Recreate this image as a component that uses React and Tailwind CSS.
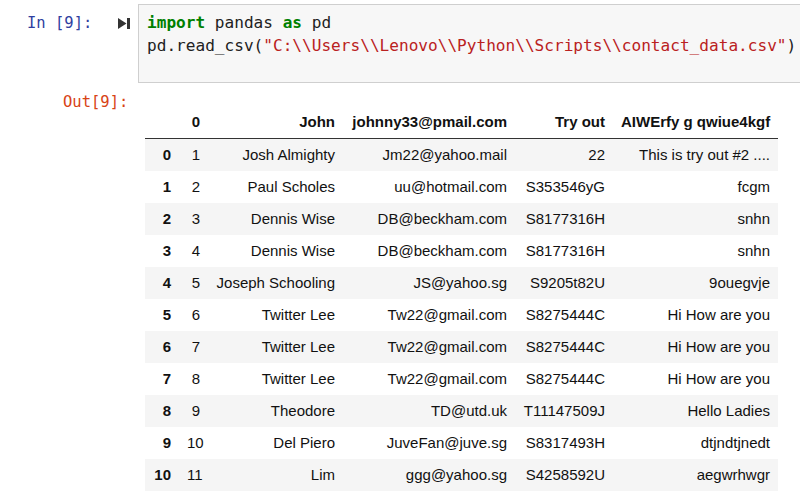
import React from 'react';

const rows = [
  ['0', '1', 'Josh Almighty', 'Jm22@yahoo.mail', '22', 'This is try out #2 ....'],
  ['1', '2', 'Paul Scholes', 'uu@hotmail.com', 'S353546yG', 'fcgm'],
  ['2', '3', 'Dennis Wise', 'DB@beckham.com', 'S8177316H', 'snhn'],
  ['3', '4', 'Dennis Wise', 'DB@beckham.com', 'S8177316H', 'snhn'],
  ['4', '5', 'Joseph Schooling', 'JS@yahoo.sg', 'S9205t82U', '9ouegvje'],
  ['5', '6', 'Twitter Lee', 'Tw22@gmail.com', 'S8275444C', 'Hi How are you'],
  ['6', '7', 'Twitter Lee', 'Tw22@gmail.com', 'S8275444C', 'Hi How are you'],
  ['7', '8', 'Twitter Lee', 'Tw22@gmail.com', 'S8275444C', 'Hi How are you'],
  ['8', '9', 'Theodore', 'TD@utd.uk', 'T11147509J', 'Hello Ladies'],
  ['9', '10', 'Del Piero', 'JuveFan@juve.sg', 'S8317493H', 'dtjndtjnedt'],
  ['10', '11', 'Lim', 'ggg@yahoo.sg', 'S4258592U', 'aegwrhwgr'],
];

const widths = ['w-[34px]', 'w-[29px]', 'w-[135px]', 'w-[172px]', 'w-[98px]', 'w-[165px]'];

const csvPath = 'C:\\\\Users\\\\Lenovo\\\\Python\\\\Scripts\\\\contact_data.csv';

function Cell({ i, bold, children }) {
  return (
    <div className={`${widths[i]} shrink-0 px-[8px] text-right whitespace-nowrap ${bold ? 'font-bold' : ''}`}>
      {children}
    </div>
  );
}

function RunIcon() {
  return (
    <svg width="12" height="11" viewBox="0 0 12 11" className="text-[#333]">
      <path d="M0 0 L8.5 5.5 L0 11 Z" fill="currentColor" />
      <rect x="9" y="0" width="3" height="11" fill="currentColor" />
    </svg>
  );
}

export default function App() {
  return (
    <div className="w-[800px] h-[496px] overflow-hidden bg-white">
      {/* input cell */}
      <div className="flex pt-[4px]">
        <div className="w-[138px] shrink-0 flex items-start font-['DejaVu_Sans_Mono',monospace] text-[15.5px] leading-[22.5px] pt-[8px]">
          <span className="pl-[27px] text-[#303f9f]">In [9]:</span>
          <span className="ml-auto mr-[8px] mt-[6px]">
            <RunIcon />
          </span>
        </div>
        <div className="w-[700px] shrink-0 h-[79px] border border-[#cfcfcf] bg-[#f7f7f7] pl-[8px] pt-[7px] font-['DejaVu_Sans_Mono',monospace] text-[16.1px] leading-[22.5px] text-[#212121] whitespace-pre">
          <div>
            <span className="text-[#008000] font-bold">import</span> pandas <span className="text-[#008000] font-bold">as</span> pd
          </div>
          <div>
            pd.read_csv(<span className="text-[#ba2121]">"{csvPath}"</span>)
          </div>
        </div>
      </div>

      {/* output */}
      <div className="flex">
        <div className="w-[138px] shrink-0 pt-[8px] pl-[63px] font-['DejaVu_Sans_Mono',monospace] text-[15.5px] leading-[22px] text-[#d84315]">
          Out[9]:
        </div>
        <div className="pt-[23px] pl-[7px] font-['Liberation_Sans',Arial,sans-serif] text-[15px] text-[#111]">
          <div className="flex items-center h-[33px] border-b border-[#333]">
            <Cell i={0} bold></Cell>
            <Cell i={1} bold>0</Cell>
            <Cell i={2} bold>John</Cell>
            <Cell i={3} bold>johnny33@pmail.com</Cell>
            <Cell i={4} bold>Try out</Cell>
            <Cell i={5} bold>AIWErfy g qwiue4kgf</Cell>
          </div>
          {rows.map((r, idx) => (
            <div key={idx} className={`flex items-center h-[32px] ${idx % 2 === 0 ? 'bg-[#f5f5f5]' : 'bg-white'}`}>
              {r.map((v, i) => (
                <Cell key={i} i={i} bold={i === 0}>{v}</Cell>
              ))}
            </div>
          ))}
        </div>
      </div>
    </div>
  );
}
